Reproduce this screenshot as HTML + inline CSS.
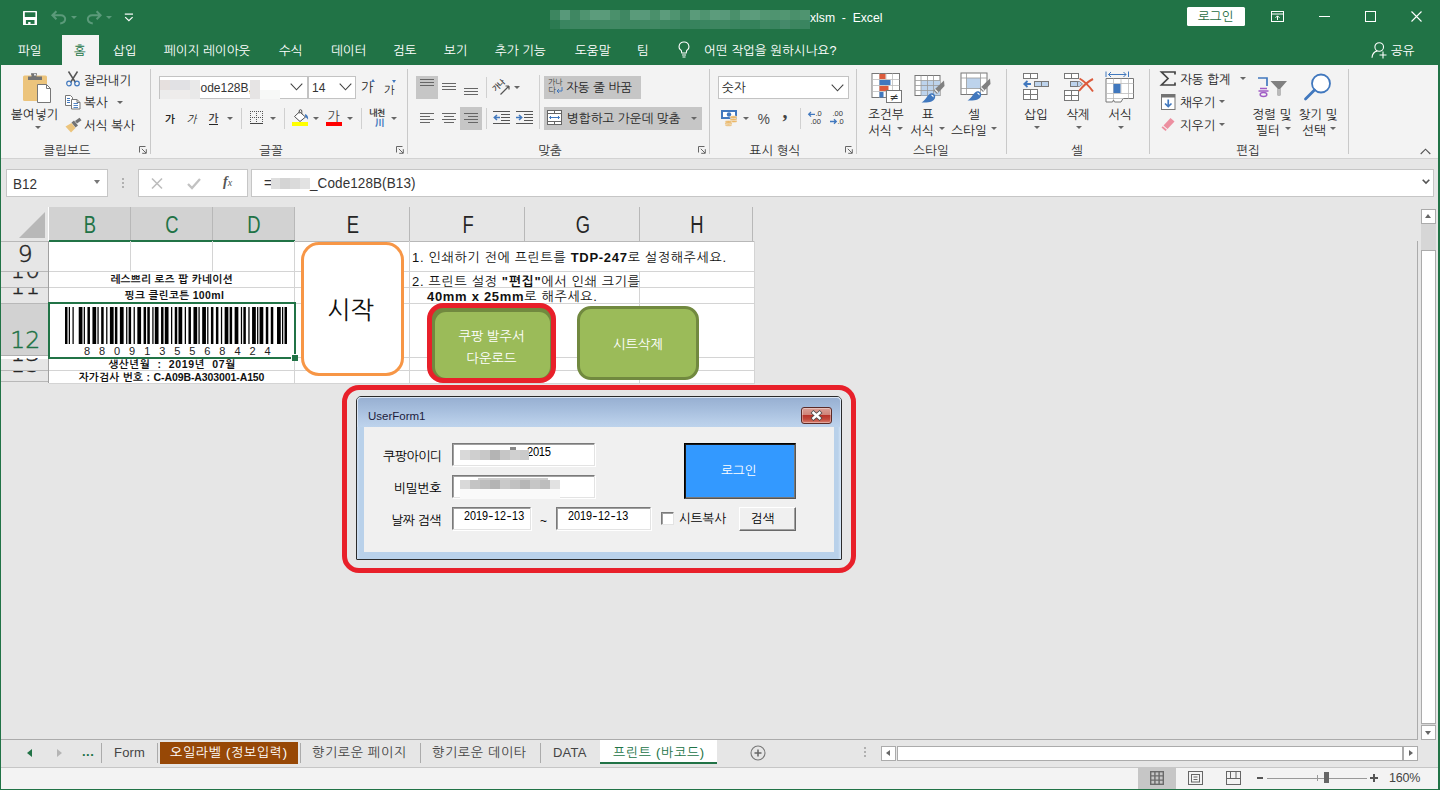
<!DOCTYPE html>
<html lang="ko"><head><meta charset="utf-8"><title>Excel</title>
<style>
*{box-sizing:border-box;margin:0;padding:0}
html,body{width:1440px;height:790px;overflow:hidden}
body{background:#e6e6e6;font-family:"Liberation Sans","NanumGothic","Noto Sans CJK KR",sans-serif;font-size:12.6px;color:#262626;position:relative;letter-spacing:0}
.a{position:absolute}
.t{position:absolute;white-space:nowrap;line-height:16px;color:#262626}
#title{left:0;top:0;width:1440px;height:65px;background:#217346}
#ribbon{left:1px;top:65px;width:1438px;height:94px;background:#f3f3f3;border-bottom:1px solid #d2d2d2}
.w{color:#fff}
.sep{position:absolute;top:69px;height:85px;width:1px;background:#c9c9c9}
.gl{position:absolute;top:143px;font-size:12.6px;line-height:16px;color:#333;white-space:nowrap;transform:translateX(-50%)}
.hl{position:absolute;background:#c6c6c6}
.box{position:absolute;background:#fff;border:1px solid #c3c3c3}
.arr{position:absolute;width:0;height:0;border-left:3px solid transparent;border-right:3px solid transparent;border-top:3px solid #666}
svg{position:absolute;overflow:visible}
</style></head><body>
<div id="title" class="a"></div>
<div id="ribbon" class="a"></div>

<svg style="left:23px;top:11px" width="14" height="14" viewBox="0 0 14 14"><rect x="0" y="0" width="14" height="14" rx="0.6" fill="#fff"/><rect x="1.8" y="1.3" width="10.6" height="4.7" fill="#217346"/><rect x="2.9" y="9" width="8.6" height="3.9" fill="#217346"/><rect x="5.2" y="11" width="2.3" height="2" fill="#fff"/></svg>
<svg style="left:51px;top:10px" width="16" height="15" viewBox="0 0 16 15"><path d="M5.4 1.2 L1.4 5.3 L5.4 9.2 M1.6 5.3 H9.8 C15.5 5.3 16 12.5 9.2 13.4" fill="none" stroke="#5b9a7a" stroke-width="2"/></svg>
<div class="arr" style="left:71px;top:16px;border-top-color:#5b9a7a;border-left-width:3px;border-right-width:3px;border-top-width:3.5px"></div>
<svg style="left:86px;top:10px" width="16" height="15" viewBox="0 0 16 15"><path d="M10.6 1.2 L14.6 5.3 L10.6 9.2 M14.4 5.3 H6.2 C0.5 5.3 0 12.5 6.8 13.4" fill="none" stroke="#5b9a7a" stroke-width="2"/></svg>
<div class="arr" style="left:106px;top:16px;border-top-color:#5b9a7a;border-left-width:3px;border-right-width:3px;border-top-width:3.5px"></div>
<svg style="left:124px;top:13px" width="10" height="9" viewBox="0 0 10 9"><path d="M0.8 1.1h8.2" stroke="#fff" stroke-width="1.2"/><path d="M1.2 4.1 L4.9 7.7 L8.6 4.1" fill="none" stroke="#fff" stroke-width="1.2"/></svg>
<div class="a" style="left:550px;top:10px;width:10px;height:10px;background:#3d8660"></div>
<div class="a" style="left:550px;top:20px;width:10px;height:9px;background:#2b7a51"></div>
<div class="a" style="left:560px;top:10px;width:10px;height:10px;background:#58997a"></div>
<div class="a" style="left:560px;top:20px;width:10px;height:9px;background:#3a8560"></div>
<div class="a" style="left:570px;top:10px;width:10px;height:10px;background:#3f8762"></div>
<div class="a" style="left:570px;top:20px;width:10px;height:9px;background:#3d8762"></div>
<div class="a" style="left:580px;top:10px;width:10px;height:10px;background:#4f9470"></div>
<div class="a" style="left:580px;top:20px;width:10px;height:9px;background:#3f8762"></div>
<div class="a" style="left:590px;top:10px;width:10px;height:10px;background:#5c9c7c"></div>
<div class="a" style="left:590px;top:20px;width:10px;height:9px;background:#3d8660"></div>
<div class="a" style="left:600px;top:10px;width:10px;height:10px;background:#5a9b7a"></div>
<div class="a" style="left:600px;top:20px;width:10px;height:9px;background:#3f8762"></div>
<div class="a" style="left:610px;top:10px;width:10px;height:10px;background:#4a906b"></div>
<div class="a" style="left:610px;top:20px;width:10px;height:9px;background:#418964"></div>
<div class="a" style="left:620px;top:10px;width:10px;height:10px;background:#3f8762"></div>
<div class="a" style="left:620px;top:20px;width:10px;height:9px;background:#3f8762"></div>
<div class="a" style="left:630px;top:10px;width:10px;height:10px;background:#5a9b7a"></div>
<div class="a" style="left:630px;top:20px;width:10px;height:9px;background:#3d8660"></div>
<div class="a" style="left:640px;top:10px;width:10px;height:10px;background:#58997a"></div>
<div class="a" style="left:640px;top:20px;width:10px;height:9px;background:#3f8762"></div>
<div class="a" style="left:650px;top:10px;width:10px;height:10px;background:#4a906b"></div>
<div class="a" style="left:650px;top:20px;width:10px;height:9px;background:#418964"></div>
<div class="a" style="left:660px;top:10px;width:10px;height:10px;background:#5c9c7c"></div>
<div class="a" style="left:660px;top:20px;width:10px;height:9px;background:#3d8660"></div>
<div class="a" style="left:670px;top:10px;width:10px;height:10px;background:#4f9470"></div>
<div class="a" style="left:670px;top:20px;width:10px;height:9px;background:#3a8560"></div>
<div class="a" style="left:680px;top:10px;width:10px;height:10px;background:#3f8762"></div>
<div class="a" style="left:680px;top:20px;width:10px;height:9px;background:#35825b"></div>
<div class="a" style="left:690px;top:10px;width:10px;height:10px;background:#5a9b7a"></div>
<div class="a" style="left:690px;top:20px;width:10px;height:9px;background:#37835d"></div>
<div class="a" style="left:700px;top:10px;width:10px;height:10px;background:#4f9470"></div>
<div class="a" style="left:700px;top:20px;width:10px;height:9px;background:#3a8560"></div>
<div class="a" style="left:710px;top:10px;width:10px;height:10px;background:#5c9c7c"></div>
<div class="a" style="left:710px;top:20px;width:10px;height:9px;background:#3d8660"></div>
<div class="a" style="left:720px;top:10px;width:10px;height:10px;background:#58997a"></div>
<div class="a" style="left:720px;top:20px;width:10px;height:9px;background:#3f8762"></div>
<div class="a" style="left:730px;top:10px;width:10px;height:10px;background:#4a906b"></div>
<div class="a" style="left:730px;top:20px;width:10px;height:9px;background:#3a8560"></div>
<div class="a" style="left:740px;top:10px;width:10px;height:10px;background:#5a9b7a"></div>
<div class="a" style="left:740px;top:20px;width:10px;height:9px;background:#37835d"></div>
<div class="a" style="left:750px;top:10px;width:10px;height:10px;background:#5c9c7c"></div>
<div class="a" style="left:750px;top:20px;width:10px;height:9px;background:#35825b"></div>
<div class="a" style="left:760px;top:10px;width:10px;height:10px;background:#529672"></div>
<div class="a" style="left:760px;top:20px;width:10px;height:9px;background:#3f8762"></div>
<div class="a" style="left:770px;top:10px;width:10px;height:10px;background:#4f9470"></div>
<div class="a" style="left:770px;top:20px;width:10px;height:9px;background:#3a8560"></div>
<div class="a" style="left:780px;top:10px;width:10px;height:10px;background:#529672"></div>
<div class="a" style="left:780px;top:20px;width:10px;height:9px;background:#45896a"></div>
<div class="a" style="left:790px;top:10px;width:10px;height:10px;background:#4a906b"></div>
<div class="a" style="left:790px;top:20px;width:10px;height:9px;background:#3d8660"></div>
<div class="a" style="left:800px;top:10px;width:10px;height:10px;background:#4f9470"></div>
<div class="a" style="left:800px;top:20px;width:10px;height:9px;background:#3a8560"></div>
<div class="t w" style="left:810px;top:10px;letter-spacing:0;font-size:12.2px">xlsm&nbsp; -&nbsp; Excel</div>
<div class="a" style="left:1187px;top:7px;width:58px;height:19px;background:#fff;border-radius:1.5px"></div>
<div class="t" style="left:1198px;top:9px;color:#1e6b41">로그인</div>
<svg style="left:1271px;top:11px" width="13" height="11" viewBox="0 0 13 11"><rect x="0.5" y="0.5" width="12" height="10" fill="none" stroke="#fff"/><path d="M0.5 3h12" stroke="#fff"/><path d="M6.5 9V5 M4.5 6.8 L6.5 4.8 L8.5 6.8" fill="none" stroke="#fff"/></svg>
<div class="a" style="left:1319px;top:16px;width:11px;height:1px;background:#fff"></div>
<div class="a" style="left:1365px;top:11px;width:11px;height:11px;border:1px solid #fff"></div>
<svg style="left:1411px;top:11px" width="11" height="11" viewBox="0 0 11 11"><path d="M0.5 0.5 L10.5 10.5 M10.5 0.5 L0.5 10.5" stroke="#fff" stroke-width="1.1"/></svg>
<div class="a" style="left:62px;top:35px;width:37px;height:31px;background:#f3f3f3"></div>
<div class="t w" style="left:18px;top:43px">파일</div>
<div class="t w" style="left:113px;top:43px">삽입</div>
<div class="t w" style="left:164px;top:43px">페이지 레이아웃</div>
<div class="t w" style="left:279px;top:43px">수식</div>
<div class="t w" style="left:331px;top:43px">데이터</div>
<div class="t w" style="left:393px;top:43px">검토</div>
<div class="t w" style="left:444px;top:43px">보기</div>
<div class="t w" style="left:495px;top:43px">추가 기능</div>
<div class="t w" style="left:575px;top:43px">도움말</div>
<div class="t w" style="left:637px;top:43px">팀</div>
<div class="t w" style="left:704px;top:43px">어떤 작업을 원하시나요?</div>
<div class="t" style="left:74px;top:43px;color:#217346">홈</div>
<svg style="left:678px;top:41px" width="12" height="17" viewBox="0 0 12 17"><path d="M6 1 A4.6 4.6 0 0 0 3.3 9.5 L3.8 12 H8.2 L8.7 9.5 A4.6 4.6 0 0 0 6 1z" fill="none" stroke="#fff" stroke-width="1.1"/><path d="M4 14h4 M4.5 16h3" stroke="#fff" stroke-width="1.1"/></svg>
<svg style="left:1371px;top:41px" width="16" height="18" viewBox="0 0 16 18"><circle cx="8.2" cy="6" r="4.3" fill="none" stroke="#fff" stroke-width="1.1"/><path d="M1 16.8 C1.3 12.5 3.5 10.6 6.3 9.9" fill="none" stroke="#fff" stroke-width="1.1"/><path d="M12 10.5v7 M8.5 14h7" stroke="#fff" stroke-width="1.1"/></svg>
<div class="t w" style="left:1391px;top:43px">공유</div>
<div class="sep" style="left:150px"></div>
<div class="sep" style="left:407px"></div>
<div class="sep" style="left:709px"></div>
<div class="sep" style="left:856px"></div>
<div class="sep" style="left:1006px"></div>
<div class="sep" style="left:1149px"></div>
<div class="sep" style="left:1348px"></div>
<div class="a" style="left:241px;top:108px;width:1px;height:21px;background:#d0d0d0"></div>
<div class="a" style="left:284px;top:108px;width:1px;height:21px;background:#d0d0d0"></div>
<div class="a" style="left:361px;top:108px;width:1px;height:21px;background:#d0d0d0"></div>
<div class="a" style="left:486px;top:77px;width:1px;height:21px;background:#d0d0d0"></div>
<div class="a" style="left:486px;top:108px;width:1px;height:21px;background:#d0d0d0"></div>
<div class="a" style="left:539px;top:75px;width:1px;height:54px;background:#d0d0d0"></div>
<div class="a" style="left:800px;top:108px;width:1px;height:21px;background:#d0d0d0"></div>
<div class="hl" style="left:416px;top:76px;width:22px;height:23px"></div>
<div class="hl" style="left:460px;top:107px;width:22px;height:23px"></div>
<div class="hl" style="left:544px;top:76px;width:97px;height:23px"></div>
<div class="hl" style="left:544px;top:107px;width:158px;height:23px"></div>
<div class="gl" style="left:67px">클립보드</div>
<div class="gl" style="left:271px">글꼴</div>
<div class="gl" style="left:550px">맞춤</div>
<div class="gl" style="left:775px">표시 형식</div>
<div class="gl" style="left:931px">스타일</div>
<div class="gl" style="left:1077px">셀</div>
<div class="gl" style="left:1248px">편집</div>
<svg style="left:139px;top:146px" width="8" height="8" viewBox="0 0 8 8"><path d="M0.5 6.5V0.5H6.5" fill="none" stroke="#666" stroke-width="1"/><path d="M2.8 2.8L7 7M7.3 3.2V7.3H3.2" fill="none" stroke="#666" stroke-width="1"/></svg>
<svg style="left:396px;top:146px" width="8" height="8" viewBox="0 0 8 8"><path d="M0.5 6.5V0.5H6.5" fill="none" stroke="#666" stroke-width="1"/><path d="M2.8 2.8L7 7M7.3 3.2V7.3H3.2" fill="none" stroke="#666" stroke-width="1"/></svg>
<svg style="left:698px;top:146px" width="8" height="8" viewBox="0 0 8 8"><path d="M0.5 6.5V0.5H6.5" fill="none" stroke="#666" stroke-width="1"/><path d="M2.8 2.8L7 7M7.3 3.2V7.3H3.2" fill="none" stroke="#666" stroke-width="1"/></svg>
<svg style="left:845px;top:146px" width="8" height="8" viewBox="0 0 8 8"><path d="M0.5 6.5V0.5H6.5" fill="none" stroke="#666" stroke-width="1"/><path d="M2.8 2.8L7 7M7.3 3.2V7.3H3.2" fill="none" stroke="#666" stroke-width="1"/></svg>
<div class="t" style="left:11px;top:107px;">붙여넣기</div>
<div class="arr" style="left:35px;top:126px;border-top-color:#666"></div>
<div class="t" style="left:84px;top:73px;">잘라내기</div>
<div class="t" style="left:84px;top:95px;">복사</div>
<div class="arr" style="left:117px;top:101px;border-top-color:#666"></div>
<div class="t" style="left:84px;top:118px;">서식 복사</div>
<div class="box" style="left:159px;top:76px;width:149px;height:23px"></div>
<div class="box" style="left:308px;top:76px;width:48px;height:23px"></div>
<div class="t" style="left:200.5px;top:80px;letter-spacing:0;font-size:12px;color:#333">ode128B,</div>
<div class="t" style="left:312px;top:80px;letter-spacing:0;font-size:12px;color:#333">14</div>
<div class="a" style="left:160px;top:80px;width:10px;height:10px;background:#e6e0de"></div>
<div class="a" style="left:170px;top:80px;width:20px;height:10px;background:#e1e1e4"></div>
<div class="a" style="left:190px;top:80px;width:10px;height:10px;background:#e9e9e9"></div>
<div class="a" style="left:160px;top:90px;width:10px;height:9px;background:#ececec"></div>
<div class="a" style="left:170px;top:90px;width:20px;height:9px;background:#eeeceb"></div>
<div class="a" style="left:190px;top:90px;width:10px;height:9px;background:#e9e9e9"></div>
<div class="a" style="left:250px;top:80px;width:10px;height:19px;background:#e6e4e4"></div>
<div class="a" style="left:260px;top:90px;width:20px;height:9px;background:#f7f8f7"></div>
<svg style="left:290px;top:83px" width="13" height="8" viewBox="0 0 13 8"><path d="M0.7 0.7L6.5 6.8L12.3 0.7" fill="none" stroke="#444" stroke-width="1.1"/></svg>
<svg style="left:339px;top:83px" width="13" height="8" viewBox="0 0 13 8"><path d="M0.7 0.7L6.5 6.8L12.3 0.7" fill="none" stroke="#444" stroke-width="1.1"/></svg>
<div class="t" style="left:361px;top:80px;font-size:13px">가</div>
<div class="a" style="left:371px;top:79px;width:0;height:0;border-left:2.5px solid transparent;border-right:2.5px solid transparent;border-bottom:3px solid #4178be"></div>
<div class="t" style="left:384px;top:82px;font-size:11px">가</div>
<div class="a" style="left:392px;top:80px;width:0;height:0;border-left:2.5px solid transparent;border-right:2.5px solid transparent;border-top:3px solid #4178be"></div>
<div class="t" style="left:165px;top:110.5px;font-weight:bold;font-size:10.5px">가</div>
<div class="t" style="left:186.5px;top:110.5px;font-style:italic;font-size:10.5px">가</div>
<div class="t" style="left:208.5px;top:111.5px;font-size:10.5px;border-bottom:1px solid #262626;line-height:12.5px;font-weight:bold;color:#444">가</div>
<div class="arr" style="left:227px;top:117px;border-top-color:#666"></div>
<div class="arr" style="left:270px;top:117px;border-top-color:#666"></div>
<div class="arr" style="left:313px;top:117px;border-top-color:#666"></div>
<div class="arr" style="left:347px;top:117px;border-top-color:#666"></div>
<div class="arr" style="left:391px;top:117px;border-top-color:#666"></div>
<svg style="left:250px;top:111px" width="14" height="14" viewBox="0 0 14 14" shape-rendering="crispEdges"><path d="M0 0.5H13M0 6.5H13M0.5 0V12M6.5 0V12M12.5 0V12" fill="none" stroke="#555" stroke-width="1" stroke-dasharray="1 1"/><path d="M0 12.5H13" stroke="#444" stroke-width="1"/></svg>
<svg style="left:292px;top:109px" width="18" height="18" viewBox="0 0 18 18"><path d="M7.5 2.800L13.5 8L8 12.5L2.5 7.5Z" fill="#fff" stroke="#555" stroke-width="1"/><path d="M7.200 4.5V2a1.300 1.300 0 0 1 2.600 0V5" fill="none" stroke="#555" stroke-width="1"/><path d="M13 5c2.300 .8 3.600 2.600 3 5.800c-.8-1.600-1.700-2.400-2.800-2.800z" fill="#4178be"/><rect x="0" y="13" width="16" height="4" fill="#ffff00"/></svg>
<div class="t" style="left:327.5px;top:109px;font-size:13px;color:#444">가</div>
<div class="a" style="left:326px;top:122px;width:16px;height:4px;background:#ff0000"></div>
<div class="t" style="left:369px;top:107px;font-size:9px;letter-spacing:-0.5px;line-height:12px;font-weight:bold;color:#3a3a3a">내천</div>
<div class="t" style="left:375px;top:116.5px;font-size:9.5px;line-height:12px;font-weight:bold;color:#4178be;font-family:'Liberation Sans','Noto Sans CJK KR',sans-serif">川</div>
<svg style="left:420px;top:79px" width="14" height="9" viewBox="0 0 14 9"><rect x="0" y="0" width="14" height="1" fill="#666"/><rect x="0" y="3" width="14" height="1" fill="#666"/><rect x="0" y="6" width="14" height="1" fill="#666"/></svg>
<svg style="left:442px;top:83px" width="14" height="9" viewBox="0 0 14 9"><rect x="0" y="0" width="14" height="1" fill="#666"/><rect x="0" y="3" width="14" height="1" fill="#666"/><rect x="0" y="6" width="14" height="1" fill="#666"/></svg>
<svg style="left:464px;top:88px" width="14" height="9" viewBox="0 0 14 9"><rect x="0" y="0" width="14" height="1" fill="#666"/><rect x="0" y="3" width="14" height="1" fill="#666"/><rect x="0" y="6" width="14" height="1" fill="#666"/></svg>
<svg style="left:420px;top:113px" width="14" height="12" viewBox="0 0 14 12"><rect x="0" y="0" width="14" height="1" fill="#666"/><rect x="0" y="3" width="10" height="1" fill="#666"/><rect x="0" y="6" width="14" height="1" fill="#666"/><rect x="0" y="9" width="10" height="1" fill="#666"/></svg>
<svg style="left:442px;top:113px" width="14" height="12" viewBox="0 0 14 12"><rect x="0.0" y="0" width="14" height="1" fill="#666"/><rect x="2.0" y="3" width="10" height="1" fill="#666"/><rect x="0.0" y="6" width="14" height="1" fill="#666"/><rect x="2.0" y="9" width="10" height="1" fill="#666"/></svg>
<svg style="left:464px;top:113px" width="14" height="12" viewBox="0 0 14 12"><rect x="0" y="0" width="14" height="1" fill="#666"/><rect x="4" y="3" width="10" height="1" fill="#666"/><rect x="0" y="6" width="14" height="1" fill="#666"/><rect x="4" y="9" width="10" height="1" fill="#666"/></svg>
<svg style="left:490px;top:77px" width="22" height="20" viewBox="0 0 22 20"><path d="M10.5 17.5L19 9M19 9h-3.5M19 9v3.5" fill="none" stroke="#555" stroke-width="1.200"/><text x="9" y="11" font-size="7.5" fill="#444" font-weight="bold" text-anchor="middle" transform="rotate(-45 9 9)" font-family="Liberation Sans,NanumGothic,sans-serif" letter-spacing="-0.5">가나</text></svg>
<div class="arr" style="left:514px;top:86px;border-top-color:#666"></div>
<svg style="left:493px;top:111px" width="17" height="14" viewBox="0 0 17 14"><path d="M0 .5h17M8 3.5h9M8 6.5h9M8 9.5h9M0 12.5h17" stroke="#555"/><path d="M7 6.5H1.5M4 4L1.3 6.5L4 9" fill="none" stroke="#4178be" stroke-width="1.5"/></svg>
<svg style="left:516px;top:111px" width="17" height="14" viewBox="0 0 17 14"><path d="M0 .5h17M8 3.5h9M8 6.5h9M8 9.5h9M0 12.5h17" stroke="#555"/><path d="M0 6.5H5.5M3 4L5.7 6.5L3 9" fill="none" stroke="#4178be" stroke-width="1.5"/></svg>
<div class="t" style="left:548px;top:78px;font-size:8px;letter-spacing:-0.5px;line-height:9px;color:#3a3a3a">가나</div>
<div class="t" style="left:548px;top:86px;font-size:8px;line-height:9px;color:#3a3a3a">다</div>
<svg style="left:556px;top:87px" width="7" height="7" viewBox="0 0 7 7"><path d="M6 0v4H1.5M3 2L1 4L3 6" fill="none" stroke="#4178be" stroke-width="1"/></svg>
<div class="t" style="left:566px;top:80px;">자동 줄 바꿈</div>
<svg style="left:547px;top:110px" width="15" height="15" viewBox="0 0 15 15"><rect x=".5" y=".5" width="14" height="14" fill="#fff" stroke="#666"/><path d="M.5 3.5h14M.5 11.5h14M7.5 .5v3M7.5 11.5v3" stroke="#666"/><path d="M2.5 7.5h10M4 6L2.5 7.5L4 9M11 6L12.5 7.5L11 9" fill="none" stroke="#4178be"/></svg>
<div class="t" style="left:567px;top:111px;">병합하고 가운데 맞춤</div>
<div class="arr" style="left:691px;top:117px;border-top-color:#666"></div>
<div class="box" style="left:718px;top:76px;width:131px;height:23px"></div>
<div class="t" style="left:722px;top:80px;">숫자</div>
<svg style="left:831px;top:84px" width="13" height="8" viewBox="0 0 13 8"><path d="M0.7 0.7L6.5 6.8L12.3 0.7" fill="none" stroke="#444" stroke-width="1.1"/></svg>
<svg style="left:721px;top:110px" width="17" height="17" viewBox="0 0 17 17"><rect x="1" y="1" width="14" height="7" fill="#fff" stroke="#4178be" stroke-width="2"/><path d="M0 0h3L0 3zM16 0h-3l3 3zM0 9h3L0 6z" fill="#4178be"/><circle cx="8" cy="4.5" r="2.2" fill="#4178be"/><g fill="#eab665" stroke="#f3f3f3" stroke-width=".5"><ellipse cx="12.5" cy="11.3" rx="3.6" ry="1.3"/><ellipse cx="12.5" cy="9.2" rx="3.6" ry="1.3"/><ellipse cx="12.5" cy="7.2" rx="3.6" ry="1.4"/><ellipse cx="7.5" cy="15" rx="3.6" ry="1.3"/><ellipse cx="7.5" cy="13.6" rx="3.6" ry="1.3"/><ellipse cx="7.5" cy="12" rx="3.6" ry="1.4"/></g></svg>
<div class="arr" style="left:743px;top:117px;border-top-color:#666"></div>
<div class="t" style="left:756.5px;top:110.5px;font-size:15.5px;letter-spacing:0;color:#4a4a4a;transform:scaleX(.88)">%</div>
<div class="t" style="left:782.5px;top:103px;font-size:20px;font-weight:bold;letter-spacing:0;color:#444;font-family:'Liberation Serif',serif">,</div>
<svg style="left:808px;top:110px" width="15" height="15" viewBox="0 0 15 15"><text x="7.5" y="6.4" font-size="7.5" fill="#333" font-family="Liberation Sans,sans-serif">.0</text><text x="2.5" y="13.8" font-size="7.5" fill="#333" font-family="Liberation Sans,sans-serif">.00</text><path d="M7 4.3H0.8M3 2L0.7 4.3L3 6.6" fill="none" stroke="#4178be" stroke-width="1.3"/></svg>
<svg style="left:830px;top:110px" width="15" height="15" viewBox="0 0 15 15"><text x="2.5" y="6.4" font-size="7.5" fill="#333" font-family="Liberation Sans,sans-serif">.00</text><text x="7.5" y="13.8" font-size="7.5" fill="#333" font-family="Liberation Sans,sans-serif">.0</text><path d="M0 11.5H6.2M4 9.2L6.3 11.5L4 13.8" fill="none" stroke="#4178be" stroke-width="1.3"/></svg>
<div class="t" style="left:886px;top:107px;transform:translateX(-50%);">조건부</div>
<div class="t" style="left:880px;top:123px;transform:translateX(-50%);">서식</div>
<div class="arr" style="left:897px;top:127px;border-top-color:#666"></div>
<div class="t" style="left:928px;top:107px;transform:translateX(-50%);">표</div>
<div class="t" style="left:922px;top:123px;transform:translateX(-50%);">서식</div>
<div class="arr" style="left:939px;top:127px;border-top-color:#666"></div>
<div class="t" style="left:974px;top:107px;transform:translateX(-50%);">셀</div>
<div class="t" style="left:969px;top:123px;transform:translateX(-50%);">스타일</div>
<div class="arr" style="left:991px;top:127px;border-top-color:#666"></div>
<div class="t" style="left:1036px;top:107px;transform:translateX(-50%);">삽입</div>
<div class="arr" style="left:1034px;top:126px;border-top-color:#666"></div>
<div class="t" style="left:1078px;top:107px;transform:translateX(-50%);">삭제</div>
<div class="arr" style="left:1076px;top:126px;border-top-color:#666"></div>
<div class="t" style="left:1120px;top:107px;transform:translateX(-50%);">서식</div>
<div class="arr" style="left:1118px;top:126px;border-top-color:#666"></div>
<div class="t" style="left:1180px;top:72px;">자동 합계</div>
<div class="arr" style="left:1240px;top:77px;border-top-color:#666"></div>
<div class="t" style="left:1180px;top:95px;">채우기</div>
<div class="arr" style="left:1219px;top:100px;border-top-color:#666"></div>
<div class="t" style="left:1180px;top:118px;">지우기</div>
<div class="arr" style="left:1219px;top:123px;border-top-color:#666"></div>
<div class="t" style="left:1272px;top:107px;transform:translateX(-50%);">정렬 및</div>
<div class="t" style="left:1268px;top:123px;transform:translateX(-50%);">필터</div>
<div class="arr" style="left:1285px;top:127px;border-top-color:#666"></div>
<div class="t" style="left:1318px;top:107px;transform:translateX(-50%);">찾기 및</div>
<div class="t" style="left:1314px;top:123px;transform:translateX(-50%);">선택</div>
<div class="arr" style="left:1330px;top:127px;border-top-color:#666"></div>
<svg style="left:1420px;top:148px" width="11" height="7" viewBox="0 0 11 7"><path d="M.7 6L5.5 1.2L10.3 6" fill="none" stroke="#555" stroke-width="1.1"/></svg>
<svg style="left:22px;top:72px" width="30" height="32" viewBox="0 0 30 32"><rect x="1" y="3.5" width="24" height="25.5" rx="1.5" fill="#ecc47c"/><path d="M6 8V4.5h3.5V3a1 1 0 0 1 1 -1.8h3a1 1 0 0 1 1 1.8V4.5H20V8z" fill="#737373"/><circle cx="13" cy="2.8" r="1" fill="#f3f3f3"/><path d="M15.5 12.5h9l4 4v14h-13z" fill="#fff" stroke="#777" stroke-width="1"/><path d="M24.5 12.5v4h4" fill="none" stroke="#777" stroke-width="1"/></svg>
<svg style="left:65px;top:71px" width="16" height="16" viewBox="0 0 16 16"><path d="M3.5 0.5L10.5 11.5M12.5 0.5L5.5 11.5" stroke="#555" stroke-width="1.5" fill="none"/><circle cx="4" cy="12.5" r="2.3" fill="none" stroke="#4178be" stroke-width="1.2"/><circle cx="12" cy="12.5" r="2.3" fill="none" stroke="#4178be" stroke-width="1.2"/></svg>
<svg style="left:65px;top:95px" width="16" height="15" viewBox="0 0 16 15"><path d="M0.5 0.5h5l2 2v8h-7z" fill="#fff" stroke="#777"/><path d="M2 3.5h3M2 5.5h3M2 7.5h3" stroke="#4178be"/><path d="M6.5 4.5h5.5l3 3v6.5h-8.5z" fill="#fff" stroke="#777"/><path d="M12 4.5v3h3" fill="none" stroke="#777"/><path d="M8.5 8.5h4.5M8.5 10.5h4.5M8.5 12.5h4.5" stroke="#4178be" stroke-width="0.9"/></svg>
<svg style="left:65px;top:117px" width="17" height="16" viewBox="0 0 17 16"><path d="M0.5 9.5L6.5 6L10.5 11L6 15.5z" fill="#ecc47c"/><path d="M6.5 5.5L9 3.5L13 8.5L10.5 10.5z" fill="#737373"/><path d="M10 4L14.5 0.8L16.5 3.3L12 6.5z" fill="#737373"/></svg>
<svg style="left:871px;top:73px" width="32" height="31" viewBox="0 0 32 31"><rect x="1" y="0.5" width="27.5" height="24" fill="#fff" stroke="#777"/><path d="M1 6.5h27.5M1 12.5h27.5M1 18.5h27.5M8.5 0.5v24M15 0.5v24M21.5 0.5v24" stroke="#bbb" stroke-width="0.8"/><rect x="8.5" y="1" width="6" height="5" fill="#dc5b3c"/><rect x="8.5" y="7" width="11" height="5" fill="#4178be"/><rect x="8.5" y="13" width="9" height="5" fill="#dc5b3c"/><rect x="8.5" y="19" width="4" height="5.5" fill="#4178be"/><rect x="15.5" y="17.5" width="15" height="12" fill="#fff" stroke="#777"/><text x="23" y="27.5" text-anchor="middle" font-size="11" fill="#333" font-family="DejaVu Sans,sans-serif">≠</text></svg>
<svg style="left:914px;top:75px" width="27" height="21" viewBox="0 0 27 21"><rect x="1" y="0.5" width="25" height="20" fill="#fff" stroke="#777"/><rect x="7" y="5.5" width="19" height="15" fill="#bdd3ec"/><path d="M1 5.5h25M1 10.5h25M1 15.5h25M7 0.5v20M13.5 0.5v20M19.5 0.5v20" stroke="#999" stroke-width="0.8"/></svg>
<svg style="left:921px;top:80px" width="24" height="24" viewBox="0 0 24 24"><path d="M23 0.5L23.5 6L16 14L12.5 10.5z" fill="#808080"/><path d="M14 9.5L17 12.5" stroke="#f3f3f3" stroke-width="1.2"/><path d="M0.5 22.5C5 20 6 15 9.5 13.5c3 -1 5.5 1.5 4.5 4.5c-1 3.5 -6 5 -13.5 4.5z" fill="#4178be"/><path d="M10 15c1.5 -0.5 3 0.5 2.5 2.5z" fill="#fff"/></svg>
<svg style="left:960px;top:72px" width="28" height="23" viewBox="0 0 28 23"><rect x="1" y="1" width="26" height="21.5" fill="#fff" stroke="#777"/><rect x="6.5" y="6" width="14" height="10.5" fill="#bdd3ec"/><path d="M1 6h26M1 16.5h26M6.5 1v21.5M20.5 1v21.5" stroke="#999" stroke-width="0.8"/></svg>
<svg style="left:967px;top:78px" width="24" height="24" viewBox="0 0 24 24"><path d="M23 0.5L23.5 6L16 14L12.5 10.5z" fill="#808080"/><path d="M14 9.5L17 12.5" stroke="#f3f3f3" stroke-width="1.2"/><path d="M0.5 22.5C5 20 6 15 9.5 13.5c3 -1 5.5 1.5 4.5 4.5c-1 3.5 -6 5 -13.5 4.5z" fill="#4178be"/><path d="M10 15c1.5 -0.5 3 0.5 2.5 2.5z" fill="#fff"/></svg>
<svg style="left:1022px;top:72px" width="28" height="29" viewBox="0 0 28 29"><rect x="1.5" y="1.5" width="7" height="5" fill="#fff" stroke="#777"/><rect x="8.5" y="1.5" width="7" height="5" fill="#fff" stroke="#777"/><rect x="12.5" y="9.5" width="7" height="5" fill="#bdd3ec" stroke="#777"/><rect x="19.5" y="9.5" width="7" height="5" fill="#bdd3ec" stroke="#777"/><rect x="1.5" y="17.5" width="7" height="5" fill="#fff" stroke="#777"/><rect x="8.5" y="17.5" width="7" height="5" fill="#fff" stroke="#777"/><rect x="1.5" y="22.5" width="7" height="5" fill="#fff" stroke="#777"/><rect x="8.5" y="22.5" width="7" height="5" fill="#fff" stroke="#777"/><path d="M9 12H2.5M5.5 9L2.3 12L5.5 15" fill="none" stroke="#4178be" stroke-width="1.8"/></svg>
<svg style="left:1063px;top:72px" width="32" height="30" viewBox="0 0 32 30"><rect x="1.5" y="1.5" width="7" height="5" fill="#fff" stroke="#777"/><rect x="8.5" y="1.5" width="7" height="5" fill="#fff" stroke="#777"/><rect x="7.5" y="9.5" width="7" height="5" fill="#bdd3ec" stroke="#777"/><path d="M14.5 9.5h2l3 2.5l-3 2.5h-2z" fill="#bdd3ec" stroke="#777" stroke-width="0.8"/><rect x="1.5" y="18.5" width="7" height="5" fill="#fff" stroke="#777"/><rect x="8.5" y="18.5" width="7" height="5" fill="#fff" stroke="#777"/><rect x="1.5" y="23.5" width="7" height="5" fill="#fff" stroke="#777"/><rect x="8.5" y="23.5" width="7" height="5" fill="#fff" stroke="#777"/><path d="M16.5 6.5C21 9 26 14 30 19.5" fill="none" stroke="#dc5b3c" stroke-width="2"/><path d="M30 7C25 9.5 20 14 16 19" fill="none" stroke="#dc5b3c" stroke-width="2"/></svg>
<svg style="left:1105px;top:71px" width="30" height="33" viewBox="0 0 30 33"><path d="M1 0.5v5.5M23.5 0.5v5.5M3.5 3.5h17.5M6 1L3.5 3.5L6 6M18.5 1L21 3.5L18.5 6" fill="none" stroke="#4178be" stroke-width="1"/><path d="M1 7.5h27.5v20h-10.5l-2 3.5h-6.5l-1 -2l-1 2h-6.5z" fill="#fff" stroke="#777"/><path d="M1 12.5h27.5M1 22.5h27.5M8.5 7.5v15M16 7.5v15M23.5 7.5v20M1 27.5h17.5M8.5 22.5v6.5" stroke="#bbb" stroke-width="0.8" fill="none"/><rect x="8.5" y="13" width="7" height="9" fill="#4178be"/></svg>
<svg style="left:1160px;top:71px" width="16" height="15" viewBox="0 0 16 15"><path d="M15 3.5V1H1.5L8 7.5L1.5 14H15V11.5" fill="none" stroke="#444" stroke-width="1.7"/></svg>
<svg style="left:1161px;top:94px" width="15" height="16" viewBox="0 0 15 16"><rect x="0.5" y="0.5" width="13.5" height="15" fill="#fff" stroke="#777"/><rect x="0.5" y="0.5" width="13.5" height="3" fill="#737373"/><path d="M7.25 5.5v7M4 9.5L7.25 12.5L10.5 9.5" fill="none" stroke="#4178be" stroke-width="1.7"/></svg>
<svg style="left:1161px;top:117px" width="15" height="15" viewBox="0 0 15 15"><path d="M9.5 1L13.5 4.5L6.5 12L2.5 8.5z" fill="#ec8fa0"/><path d="M1.8 9.3L5.8 12.8L4.5 14L0.5 10.5z" fill="#ec8fa0"/></svg>
<svg style="left:1257px;top:76px" width="31" height="22" viewBox="0 0 31 22"><path d="M1 2h9v8" fill="none" stroke="#4178be" stroke-width="1.7"/><path d="M3 12.5h7M1.5 15h10" stroke="#a05cc5" stroke-width="1.5"/><ellipse cx="6.5" cy="18.5" rx="3.3" ry="2" fill="none" stroke="#a05cc5" stroke-width="1.5"/><path d="M13.5 5h16.5l-6.5 7.5v7h-3v-7z" fill="#808080"/><path d="M21.5 13v6h1v-6z" fill="#f3f3f3"/></svg>
<svg style="left:1303px;top:72px" width="30" height="30" viewBox="0 0 30 30"><circle cx="18" cy="11.5" r="9" fill="#fff" stroke="#4178be" stroke-width="1.8"/><path d="M11.5 18L2.5 27" stroke="#4178be" stroke-width="2.8" stroke-linecap="round"/></svg>
<div class="box" style="left:6px;top:169px;width:102px;height:28px;border-color:#c6c6c6"></div>
<div class="t" style="left:13px;top:175.5px;font-size:15px;letter-spacing:0;color:#333;transform-origin:left;transform:scaleX(.9)">B12</div>
<div class="arr" style="left:94px;top:180px;border-top-width:4px;border-left-width:3.5px;border-right-width:3.5px;border-top-color:#777"></div>
<div class="a" style="left:122px;top:178px;width:2px;height:2px;background:#b0b0b0"></div>
<div class="a" style="left:122px;top:182px;width:2px;height:2px;background:#b0b0b0"></div>
<div class="a" style="left:122px;top:186px;width:2px;height:2px;background:#b0b0b0"></div>
<div class="box" style="left:138px;top:169px;width:110px;height:28px;border-color:#c6c6c6"></div>
<svg style="left:151px;top:178px" width="12" height="11" viewBox="0 0 12 11"><path d="M1 0.5L11 10.5M11 0.5L1 10.5" stroke="#bdbdbd" stroke-width="1.6"/></svg>
<svg style="left:187px;top:178px" width="14" height="11" viewBox="0 0 14 11"><path d="M1 6L5 10L13 1" fill="none" stroke="#c2c2c2" stroke-width="2.3"/></svg>
<div class="t" style="left:223px;top:174px;font-size:14px;font-style:italic;font-family:'Liberation Serif',serif;letter-spacing:0;color:#555"><b>f</b><span style="font-size:10px">x</span></div>
<div class="box" style="left:251px;top:169px;width:1183px;height:28px;border-color:#c6c6c6"></div>
<div class="t" style="left:264px;top:175px;font-size:15px;letter-spacing:0;color:#333;transform-origin:left;transform:scaleX(.9)">=</div>
<div class="a" style="left:271px;top:178px;width:9px;height:11px;background:#dedede"></div>
<div class="a" style="left:280px;top:178px;width:10px;height:11px;background:#d4d4d4"></div>
<div class="a" style="left:290px;top:178px;width:10px;height:11px;background:#dadada"></div>
<div class="a" style="left:300px;top:178px;width:10px;height:11px;background:#e2e2e2"></div>
<div class="t" style="left:310px;top:175px;font-size:15px;letter-spacing:0.1px;color:#333;transform-origin:left;transform:scaleX(.9)">_Code128B(B13)</div>
<svg style="left:1422px;top:179px" width="8" height="6" viewBox="0 0 8 6"><path d="M0.7 0.7L4 4L7.3 0.7" fill="none" stroke="#555" stroke-width="1.6"/></svg>
<div class="a" style="left:49px;top:242px;width:706px;height:141px;background:#fff"></div>
<div class="a" style="left:49px;top:207px;width:246px;height:33px;background:#d2d2d2"></div>
<div class="a" style="left:49px;top:240px;width:246px;height:2px;background:#217346"></div>
<div class="a" style="left:1px;top:304px;width:47px;height:52px;background:#d2d2d2;border-bottom:1px solid #b0b0b0"></div>
<div class="a" style="left:1px;top:356px;width:47px;height:3px;background:#fff"></div>
<div class="a" style="left:130px;top:207px;width:1px;height:33px;background:#b8b8b8"></div>
<div class="t" style="left:90.0px;top:211px;font-size:23px;line-height:28px;letter-spacing:0;color:#217346;transform:translateX(-50%) scaleX(0.8)">B</div>
<div class="a" style="left:212px;top:207px;width:1px;height:33px;background:#b8b8b8"></div>
<div class="t" style="left:172.0px;top:211px;font-size:23px;line-height:28px;letter-spacing:0;color:#217346;transform:translateX(-50%) scaleX(0.8)">C</div>
<div class="a" style="left:294px;top:207px;width:1px;height:33px;background:#b8b8b8"></div>
<div class="t" style="left:254.0px;top:211px;font-size:23px;line-height:28px;letter-spacing:0;color:#217346;transform:translateX(-50%) scaleX(0.8)">D</div>
<div class="a" style="left:409px;top:207px;width:1px;height:35px;background:#b8b8b8"></div>
<div class="t" style="left:352.5px;top:211px;font-size:23px;line-height:28px;letter-spacing:0;color:#262626;transform:translateX(-50%) scaleX(0.8)">E</div>
<div class="a" style="left:524px;top:207px;width:1px;height:35px;background:#b8b8b8"></div>
<div class="t" style="left:467.5px;top:211px;font-size:23px;line-height:28px;letter-spacing:0;color:#262626;transform:translateX(-50%) scaleX(0.8)">F</div>
<div class="a" style="left:639px;top:207px;width:1px;height:35px;background:#b8b8b8"></div>
<div class="t" style="left:582.5px;top:211px;font-size:23px;line-height:28px;letter-spacing:0;color:#262626;transform:translateX(-50%) scaleX(0.8)">G</div>
<div class="a" style="left:752px;top:207px;width:1px;height:35px;background:#b8b8b8"></div>
<div class="t" style="left:696.5px;top:211px;font-size:23px;line-height:28px;letter-spacing:0;color:#262626;transform:translateX(-50%) scaleX(0.8)">H</div>
<div class="a" style="left:48px;top:207px;width:1px;height:34px;background:#fff"></div>
<div class="a" style="left:295px;top:241px;width:459px;height:1px;background:#b8b8b8"></div>
<svg style="left:18px;top:211px" width="28" height="28" viewBox="0 0 28 28"><path d="M27 1V27H1z" fill="#b8b8b8"/></svg>
<div class="a" style="left:2px;top:241px;width:46px;height:31px;overflow:hidden"><div class="t" style="left:23.2px;bottom:4px;font-size:23.5px;line-height:28px;letter-spacing:0;font-family:DejaVu Sans Light,DejaVu Sans,sans-serif;font-weight:200;-webkit-text-stroke:0.45px #262626;color:#262626;transform:translateX(-50%)">9</div></div>
<div class="a" style="left:1px;top:271px;width:47px;height:1px;background:#b8b8b8"></div>
<div class="a" style="left:2px;top:272px;width:46px;height:16px;overflow:hidden"><div class="t" style="left:23.2px;bottom:4px;font-size:23.5px;line-height:28px;letter-spacing:0;font-family:DejaVu Sans Light,DejaVu Sans,sans-serif;font-weight:200;-webkit-text-stroke:0.45px #262626;color:#262626;transform:translateX(-50%)">10</div></div>
<div class="a" style="left:1px;top:287px;width:47px;height:1px;background:#b8b8b8"></div>
<div class="a" style="left:2px;top:288px;width:46px;height:16px;overflow:hidden"><div class="t" style="left:23.2px;bottom:4px;font-size:23.5px;line-height:28px;letter-spacing:0;font-family:DejaVu Sans Light,DejaVu Sans,sans-serif;font-weight:200;-webkit-text-stroke:0.45px #262626;color:#262626;transform:translateX(-50%)">11</div></div>
<div class="a" style="left:1px;top:303px;width:47px;height:1px;background:#b8b8b8"></div>
<div class="a" style="left:2px;top:304px;width:46px;height:54px;overflow:hidden"><div class="t" style="left:23.2px;bottom:4px;font-size:23.5px;line-height:28px;letter-spacing:0;font-family:DejaVu Sans Light,DejaVu Sans,sans-serif;font-weight:200;-webkit-text-stroke:0.45px #217346;color:#217346;transform:translateX(-50%)">12</div></div>
<div class="a" style="left:2px;top:358px;width:46px;height:13px;overflow:hidden"><div class="t" style="left:23.2px;bottom:4px;font-size:23.5px;line-height:28px;letter-spacing:0;font-family:DejaVu Sans Light,DejaVu Sans,sans-serif;font-weight:200;-webkit-text-stroke:0.45px #262626;color:#262626;transform:translateX(-50%)">13</div></div>
<div class="a" style="left:1px;top:370px;width:47px;height:1px;background:#b8b8b8"></div>
<div class="a" style="left:2px;top:371px;width:46px;height:11px;overflow:hidden"><div class="t" style="left:23.2px;bottom:4px;font-size:23.5px;line-height:28px;letter-spacing:0;font-family:DejaVu Sans Light,DejaVu Sans,sans-serif;font-weight:200;-webkit-text-stroke:0.45px #262626;color:#262626;transform:translateX(-50%)">15</div></div>
<div class="a" style="left:1px;top:381px;width:47px;height:1px;background:#b8b8b8"></div>
<div class="a" style="left:48px;top:241px;width:1px;height:142px;background:#a0a0a0"></div>
<div class="a" style="left:1px;top:241px;width:47px;height:1px;background:#b8b8b8"></div>
<div class="a" style="left:49px;top:271px;width:706px;height:1px;background:#d4d4d4"></div>
<div class="a" style="left:49px;top:287px;width:706px;height:1px;background:#d4d4d4"></div>
<div class="a" style="left:49px;top:303px;width:706px;height:1px;background:#d4d4d4"></div>
<div class="a" style="left:49px;top:357px;width:706px;height:1px;background:#d4d4d4"></div>
<div class="a" style="left:49px;top:370px;width:706px;height:1px;background:#d4d4d4"></div>
<div class="a" style="left:49px;top:383px;width:706px;height:1px;background:#d4d4d4"></div>
<div class="a" style="left:130px;top:241px;width:1px;height:30px;background:#d4d4d4"></div>
<div class="a" style="left:212px;top:241px;width:1px;height:30px;background:#d4d4d4"></div>
<div class="a" style="left:294px;top:241px;width:1px;height:142px;background:#d4d4d4"></div>
<div class="a" style="left:409px;top:241px;width:1px;height:142px;background:#d4d4d4"></div>
<div class="a" style="left:754px;top:241px;width:1px;height:142px;background:#d4d4d4"></div>
<div class="a" style="left:639px;top:271px;width:1px;height:112px;background:#d4d4d4"></div>
<div class="t" style="left:171.5px;top:271px;font-size:10.5px;font-weight:bold;letter-spacing:0.35px;color:#111;transform:translateX(-50%)">레스쁘리 로즈 팝 카네이션</div>
<div class="t" style="left:174.5px;top:287px;font-size:10.5px;font-weight:bold;letter-spacing:0.35px;color:#111;transform:translateX(-50%)">핑크 클린코튼 100ml</div>
<div class="t" style="left:172px;top:356px;font-size:10.5px;font-weight:bold;letter-spacing:0.35px;color:#111;letter-spacing:0.65px;transform:translateX(-50%)">생산년월&nbsp; :&nbsp; 2019년&nbsp; 07월</div>
<div class="t" style="left:171.5px;top:369px;font-size:10.5px;font-weight:bold;letter-spacing:0.35px;color:#111;transform:translateX(-50%)">자가검사 번호 : <span style="letter-spacing:-0.1px">C-A09B-A303001-A150</span></div>
<svg style="left:65px;top:307px" width="222" height="37" viewBox="0 0 222 37" fill="#000" shape-rendering="auto"><rect x="0.00" y="0" width="2.49" height="37"/><rect x="3.74" y="0" width="1.25" height="37"/><rect x="7.48" y="0" width="1.25" height="37"/><rect x="13.72" y="0" width="3.74" height="37"/><rect x="18.71" y="0" width="1.25" height="37"/><rect x="22.45" y="0" width="2.49" height="37"/><rect x="27.44" y="0" width="3.74" height="37"/><rect x="32.43" y="0" width="1.25" height="37"/><rect x="36.17" y="0" width="2.49" height="37"/><rect x="41.16" y="0" width="1.25" height="37"/><rect x="44.90" y="0" width="3.74" height="37"/><rect x="49.89" y="0" width="2.49" height="37"/><rect x="54.88" y="0" width="3.74" height="37"/><rect x="61.11" y="0" width="1.25" height="37"/><rect x="63.61" y="0" width="2.49" height="37"/><rect x="68.60" y="0" width="1.25" height="37"/><rect x="72.34" y="0" width="3.74" height="37"/><rect x="78.57" y="0" width="2.49" height="37"/><rect x="82.31" y="0" width="2.49" height="37"/><rect x="87.30" y="0" width="1.25" height="37"/><rect x="89.80" y="0" width="3.74" height="37"/><rect x="96.03" y="0" width="2.49" height="37"/><rect x="99.78" y="0" width="3.74" height="37"/><rect x="106.01" y="0" width="1.25" height="37"/><rect x="109.75" y="0" width="2.49" height="37"/><rect x="113.49" y="0" width="3.74" height="37"/><rect x="119.73" y="0" width="1.25" height="37"/><rect x="123.47" y="0" width="2.49" height="37"/><rect x="128.46" y="0" width="3.74" height="37"/><rect x="133.45" y="0" width="1.25" height="37"/><rect x="137.19" y="0" width="3.74" height="37"/><rect x="142.18" y="0" width="1.25" height="37"/><rect x="145.92" y="0" width="2.49" height="37"/><rect x="150.91" y="0" width="2.49" height="37"/><rect x="155.90" y="0" width="1.25" height="37"/><rect x="159.64" y="0" width="3.74" height="37"/><rect x="164.63" y="0" width="2.49" height="37"/><rect x="169.62" y="0" width="3.74" height="37"/><rect x="175.85" y="0" width="1.25" height="37"/><rect x="178.35" y="0" width="2.49" height="37"/><rect x="183.34" y="0" width="1.25" height="37"/><rect x="187.08" y="0" width="3.74" height="37"/><rect x="192.07" y="0" width="1.25" height="37"/><rect x="194.56" y="0" width="3.74" height="37"/><rect x="200.80" y="0" width="2.49" height="37"/><rect x="205.79" y="0" width="2.49" height="37"/><rect x="212.02" y="0" width="3.74" height="37"/><rect x="217.01" y="0" width="1.25" height="37"/><rect x="219.51" y="0" width="2.49" height="37"/></svg>
<div class="t" style="left:84px;top:343px;font-size:11px;line-height:16px;letter-spacing:8.92px;color:#222">8809135568424</div>
<div class="a" style="left:48px;top:302px;width:248px;height:57px;border:2px solid #217346"></div>
<div class="a" style="left:291px;top:354px;width:7px;height:7px;background:#fff"></div>
<div class="a" style="left:292px;top:355px;width:6px;height:6px;background:#217346"></div>
<div class="t" style="left:412px;top:250px;font-size:13px;letter-spacing:0.7px;color:#111">1. 인쇄하기 전에 프린트를 <b>TDP-247</b>로 설정해주세요.</div>
<div class="t" style="left:412px;top:273.5px;font-size:13px;letter-spacing:0.7px;color:#111">2. 프린트 설정 <b>"편집"</b>에서 인쇄 크기를</div>
<div class="t" style="left:427px;top:289px;font-size:13px;letter-spacing:0.7px;color:#111"><b>40mm x 25mm</b>로 해주세요.</div>
<div class="a" style="left:301px;top:241.5px;width:102.5px;height:134.5px;border:3.6px solid #f79646;border-radius:18px;background:#fff"></div>
<div class="t" style="left:350.5px;top:295px;font-size:25px;line-height:30px;letter-spacing:0;color:#111;transform:translateX(-50%)">시작</div>
<div class="a" style="left:427px;top:303px;width:129px;height:80px;border:5px solid #e8202a;border-radius:16px;background:#71893f"></div>
<div class="a" style="left:435px;top:312px;width:114.5px;height:65.5px;border-radius:11px;background:#9bbb59"></div>
<div class="t w" style="left:491.5px;top:329px;font-size:13.3px;transform:translateX(-50%)">쿠팡 발주서</div>
<div class="t w" style="left:491.5px;top:350.5px;font-size:13.3px;transform:translateX(-50%)">다운로드</div>
<div class="a" style="left:577px;top:306px;width:122px;height:74px;border:3.5px solid #71893f;border-radius:14px;background:#9bbb59"></div>
<div class="t w" style="left:638px;top:336.5px;font-size:13.3px;transform:translateX(-50%)">시트삭제</div>
<div class="a" style="left:342px;top:385px;width:514px;height:188px;border:5px solid #e8202a;border-radius:17px"></div>
<div class="a" style="left:356px;top:396px;width:486px;height:164px;border:1px solid #2b2b2b;border-radius:5px 5px 1px 1px;background:#b9d1ea"></div>
<div class="a" style="left:357px;top:397px;width:484px;height:30px;border-radius:4px 4px 0 0;background:linear-gradient(#98b0d2 0%,#a6bedd 40%,#b7cde8 80%,#bdd3ec 100%);border-top:1px solid #dbe6f4;border-left:1px solid #dbe6f4;border-right:1px solid #dbe6f4"></div>
<div class="a" style="left:357px;top:427px;width:484px;height:132px;background:linear-gradient(90deg,#cfe0f3 0,#b9d1ea 3px,#b9d1ea 481px,#d9e8f8 484px)"></div>
<div class="a" style="left:364px;top:427px;width:470px;height:125px;background:#f0f0f0"></div>
<div class="t" style="left:368px;top:408px;font-size:11.5px;letter-spacing:0;color:#1c1c3c">UserForm1</div>
<div class="a" style="left:801px;top:407px;width:31px;height:17px;border:1px solid #5b2a26;border-radius:3px;background:linear-gradient(#dba097 0%,#cf8478 45%,#b8352b 50%,#c24a3c 75%,#d88070 100%);box-shadow:inset 0 0 0 1px rgba(255,255,255,.35)"></div>
<svg style="left:810px;top:410px" width="13" height="11" viewBox="0 0 13 11"><path d="M2 1.5L11 9.5M11 1.5L2 9.5" stroke="#4a4a4a" stroke-width="4.2"/><path d="M2.5 2L10.5 9M10.5 2L2.5 9" stroke="#fff" stroke-width="2.4"/></svg>
<div class="t" style="left:383px;top:449px;font-size:13px;font-family:'Liberation Sans','NanumGothic','Noto Sans CJK KR',sans-serif;letter-spacing:0;color:#000;letter-spacing:-0.5px;">쿠팡아이디</div>
<div class="t" style="left:394px;top:481px;font-size:13px;font-family:'Liberation Sans','NanumGothic','Noto Sans CJK KR',sans-serif;letter-spacing:0;color:#000;letter-spacing:-0.5px;">비밀번호</div>
<div class="t" style="left:391px;top:513px;font-size:13px;font-family:'Liberation Sans','NanumGothic','Noto Sans CJK KR',sans-serif;letter-spacing:0;color:#000;letter-spacing:-0.5px;">날짜 검색</div>
<div class="a" style="left:452px;top:443px;width:143px;height:23px;background:#fff;border:1px solid;border-color:#7a7a7a #e3e3e3 #e3e3e3 #7a7a7a;box-shadow:inset 1px 1px 0 #a0a0a0,1px 1px 0 #fff"></div>
<div class="a" style="left:452px;top:475px;width:143px;height:23px;background:#fff;border:1px solid;border-color:#7a7a7a #e3e3e3 #e3e3e3 #7a7a7a;box-shadow:inset 1px 1px 0 #a0a0a0,1px 1px 0 #fff"></div>
<div class="a" style="left:452px;top:507px;width:79px;height:23px;background:#fff;border:1px solid;border-color:#7a7a7a #e3e3e3 #e3e3e3 #7a7a7a;box-shadow:inset 1px 1px 0 #a0a0a0,1px 1px 0 #fff"></div>
<div class="a" style="left:556px;top:507px;width:95px;height:23px;background:#fff;border:1px solid;border-color:#7a7a7a #e3e3e3 #e3e3e3 #7a7a7a;box-shadow:inset 1px 1px 0 #a0a0a0,1px 1px 0 #fff"></div>
<div class="t" style="left:464px;top:508px;font-size:12.5px;letter-spacing:0;font-family:'Liberation Sans',sans-serif;color:#000;transform-origin:left;transform:scaleX(.865)">2019<span style="display:inline-block;transform:scaleX(1.45);margin:0 1.4px">-</span>12<span style="display:inline-block;transform:scaleX(1.45);margin:0 1.4px">-</span>13</div>
<div class="t" style="left:568px;top:508px;font-size:12.5px;letter-spacing:0;font-family:'Liberation Sans',sans-serif;color:#000;transform-origin:left;transform:scaleX(.865)">2019<span style="display:inline-block;transform:scaleX(1.45);margin:0 1.4px">-</span>12<span style="display:inline-block;transform:scaleX(1.45);margin:0 1.4px">-</span>13</div>
<div class="t" style="left:527px;top:444px;font-size:12px;letter-spacing:-0.3px;font-family:'Liberation Sans',sans-serif;color:#000;transform-origin:left;transform:scaleX(.93)">2015</div>
<div class="t" style="left:540px;top:513px;font-size:12px;font-family:'Liberation Sans','NanumGothic','Noto Sans CJK KR',sans-serif;letter-spacing:0;color:#000;">~</div>
<div class="a" style="left:460px;top:450px;width:10px;height:10px;background:#d9d9d9"></div>
<div class="a" style="left:470px;top:450px;width:10px;height:10px;background:#cfcfcf"></div>
<div class="a" style="left:480px;top:450px;width:10px;height:10px;background:#c8c8c8"></div>
<div class="a" style="left:490px;top:450px;width:10px;height:10px;background:#b4b4b4"></div>
<div class="a" style="left:500px;top:450px;width:10px;height:10px;background:#c6c6c6"></div>
<div class="a" style="left:510px;top:450px;width:10px;height:10px;background:#d0d0d0"></div>
<div class="a" style="left:520px;top:450px;width:9px;height:10px;background:#cacaca"></div>
<div class="a" style="left:510px;top:447px;width:6px;height:3px;background:#888"></div>
<div class="a" style="left:460px;top:480px;width:10px;height:9px;background:#d9d9d9"></div>
<div class="a" style="left:470px;top:480px;width:10px;height:9px;background:#c4c4c4"></div>
<div class="a" style="left:480px;top:480px;width:10px;height:9px;background:#bdbdbd"></div>
<div class="a" style="left:490px;top:480px;width:10px;height:9px;background:#b4b4b4"></div>
<div class="a" style="left:500px;top:480px;width:10px;height:9px;background:#c9c9c9"></div>
<div class="a" style="left:510px;top:480px;width:10px;height:9px;background:#c1c1c1"></div>
<div class="a" style="left:520px;top:480px;width:10px;height:9px;background:#b6b6b6"></div>
<div class="a" style="left:530px;top:480px;width:10px;height:9px;background:#c6c6c6"></div>
<div class="a" style="left:540px;top:480px;width:10px;height:9px;background:#bdbdbd"></div>
<div class="a" style="left:550px;top:480px;width:10px;height:9px;background:#e2e2e2"></div>
<div class="a" style="left:460px;top:489px;width:100px;height:10px;background:#fafafa"></div>
<div class="a" style="left:478px;top:478px;width:70px;height:2px;background:#999;opacity:.5"></div>
<div class="a" style="left:684px;top:443px;width:112px;height:56px;background:#3399ff;border:1px solid;border-color:#000 #555 #555 #000;box-shadow:inset 1px 1px 0 #1a1a1a,inset -1px -1px 0 #777"></div>
<div class="t" style="left:739px;top:463px;font-size:12.5px;font-family:'Liberation Sans','NanumGothic','Noto Sans CJK KR',sans-serif;letter-spacing:0;color:#000;color:#fff;transform:translateX(-50%)">로그인</div>
<div class="a" style="left:661px;top:512px;width:13px;height:13px;background:#fff;border:1px solid;border-color:#7a7a7a #e3e3e3 #e3e3e3 #7a7a7a;box-shadow:inset 1px 1px 0 #a0a0a0"></div>
<div class="t" style="left:679px;top:511px;font-size:12.5px;font-family:'Liberation Sans','NanumGothic','Noto Sans CJK KR',sans-serif;letter-spacing:0;color:#000;">시트복사</div>
<div class="a" style="left:739px;top:507px;width:57px;height:24px;background:#f0f0f0;border:1px solid;border-color:#fff #696969 #696969 #fff;box-shadow:inset -1px -1px 0 #a0a0a0"></div>
<div class="t" style="left:762.5px;top:511px;font-size:12.5px;font-family:'Liberation Sans','NanumGothic','Noto Sans CJK KR',sans-serif;letter-spacing:0;color:#000;transform:translateX(-50%)">검색</div>
<div class="a" style="left:1417px;top:241px;width:1px;height:499px;background:#ababab"></div>
<div class="a" style="left:1px;top:739px;width:1417px;height:1px;background:#ababab"></div>
<div class="a" style="left:1421px;top:209px;width:15px;height:531px;background:#d6d6d6"></div>
<div class="a" style="left:1421px;top:209px;width:15px;height:15px;background:#fff;border:1px solid #ababab"></div>
<div class="a" style="left:1425px;top:214px;width:0;height:0;border-left:3.5px solid transparent;border-right:3.5px solid transparent;border-bottom:4px solid #666"></div>
<div class="a" style="left:1421px;top:250px;width:15px;height:474px;background:#fff;border:1px solid #ababab"></div>
<div class="a" style="left:1421px;top:725px;width:15px;height:15px;background:#fff;border:1px solid #ababab"></div>
<div class="a" style="left:1425px;top:731px;width:0;height:0;border-left:3.5px solid transparent;border-right:3.5px solid transparent;border-top:4px solid #666"></div>
<div class="a" style="left:1px;top:767px;width:1438px;height:1px;background:#c6c6c6"></div>
<div class="a" style="left:1px;top:768px;width:1438px;height:21px;background:#f3f3f3"></div>
<div class="a" style="left:27px;top:749px;width:0;height:0;border-top:4px solid transparent;border-bottom:4px solid transparent;border-right:5px solid #217346"></div>
<div class="a" style="left:57px;top:749px;width:0;height:0;border-top:4px solid transparent;border-bottom:4px solid transparent;border-left:5px solid #b5b5b5"></div>
<div class="t" style="left:82px;top:743.5px;font-size:13px;font-weight:bold;letter-spacing:0.5px;color:#217346">...</div>
<div class="a" style="left:101px;top:743px;width:1px;height:20px;background:#ababab"></div>
<div class="a" style="left:157px;top:743px;width:1px;height:20px;background:#ababab"></div>
<div class="a" style="left:300px;top:743px;width:1px;height:20px;background:#ababab"></div>
<div class="a" style="left:420px;top:743px;width:1px;height:20px;background:#ababab"></div>
<div class="a" style="left:540px;top:743px;width:1px;height:20px;background:#ababab"></div>
<div class="t" style="left:114px;font-size:13px;letter-spacing:0.7px;color:#444;top:745px;letter-spacing:0.2px">Form</div>
<div class="a" style="left:160px;top:742px;width:138px;height:22px;background:#974806"></div>
<div class="t" style="left:170px;font-size:13px;letter-spacing:0.7px;color:#444;top:745px;color:#fff">오일라벨 (정보입력)</div>
<div class="t" style="left:312px;font-size:13px;letter-spacing:0.7px;color:#444;top:745px">향기로운 페이지</div>
<div class="t" style="left:432px;font-size:13px;letter-spacing:0.7px;color:#444;top:745px">향기로운 데이타</div>
<div class="t" style="left:553px;font-size:13px;letter-spacing:0.7px;color:#444;top:745px;letter-spacing:0.2px">DATA</div>
<div class="a" style="left:600px;top:740px;width:117px;height:24px;background:#fff;border-bottom:2px solid #217346"></div>
<div class="t" style="left:613px;font-size:13px;letter-spacing:0.7px;color:#444;top:745px;color:#217346">프린트 (바코드)</div>
<svg style="left:750px;top:745px" width="16" height="16" viewBox="0 0 16 16"><circle cx="8" cy="8" r="7" fill="none" stroke="#777" stroke-width="1.1"/><path d="M8 4.5v7M4.5 8h7" stroke="#666" stroke-width="1.5"/></svg>
<div class="a" style="left:864px;top:747px;width:2px;height:2px;background:#b0b0b0"></div>
<div class="a" style="left:864px;top:751px;width:2px;height:2px;background:#b0b0b0"></div>
<div class="a" style="left:864px;top:755px;width:2px;height:2px;background:#b0b0b0"></div>
<div class="a" style="left:881px;top:746px;width:15px;height:15px;background:#fff;border:1px solid #ababab"></div>
<div class="a" style="left:886px;top:750px;width:0;height:0;border-top:3.5px solid transparent;border-bottom:3.5px solid transparent;border-right:4px solid #666"></div>
<div class="a" style="left:897px;top:746px;width:506px;height:15px;background:#fff;border:1px solid #ababab"></div>
<div class="a" style="left:1403px;top:746px;width:15px;height:15px;background:#fff;border:1px solid #ababab"></div>
<div class="a" style="left:1409px;top:750px;width:0;height:0;border-top:3.5px solid transparent;border-bottom:3.5px solid transparent;border-left:4px solid #666"></div>
<div class="a" style="left:1138px;top:768px;width:38px;height:21px;background:#c6c6c6"></div>
<svg style="left:1150px;top:771px" width="14" height="14" viewBox="0 0 14 14"><rect x="0.7" y="0.7" width="12.6" height="12.6" fill="none" stroke="#6a6a6a" stroke-width="1.4"/><path d="M0.5 4.9h13M0.5 9.1h13M4.9 0.5v13M9.1 0.5v13" stroke="#6a6a6a" stroke-width="1.4"/></svg>
<svg style="left:1188px;top:771px" width="15" height="14" viewBox="0 0 15 14"><rect x="0.5" y="0.5" width="14" height="13" fill="none" stroke="#666"/><rect x="3.5" y="3.5" width="8" height="7.5" fill="none" stroke="#666"/><path d="M5.5 6h4M5.5 8.5h4" stroke="#666"/></svg>
<svg style="left:1226px;top:771px" width="15" height="14" viewBox="0 0 15 14"><rect x="0.5" y="0.5" width="14" height="13" fill="none" stroke="#666"/><path d="M4.5 0.5v7h5.5v-7M0.5 7.5h14" fill="none" stroke="#666"/></svg>
<div class="a" style="left:1257px;top:777px;width:6px;height:2px;background:#555"></div>
<div class="a" style="left:1267px;top:778px;width:100px;height:1px;background:#999"></div>
<div class="a" style="left:1317px;top:775px;width:1px;height:6px;background:#999"></div>
<div class="a" style="left:1324px;top:772px;width:5px;height:11px;background:#666"></div>
<div class="a" style="left:1370px;top:777px;width:8px;height:2px;background:#555"></div>
<div class="a" style="left:1373px;top:774px;width:2px;height:8px;background:#555"></div>
<div class="t" style="left:1389px;top:770px;font-size:12.5px;letter-spacing:-0.2px;color:#444">160%</div>

<div class="a" style="left:0;top:0;width:1px;height:790px;background:#217346"></div>
<div class="a" style="left:1438px;top:0;width:2px;height:790px;background:#217346"></div>
<div class="a" style="left:0;top:789px;width:1440px;height:1px;background:#217346"></div>
</body></html>
